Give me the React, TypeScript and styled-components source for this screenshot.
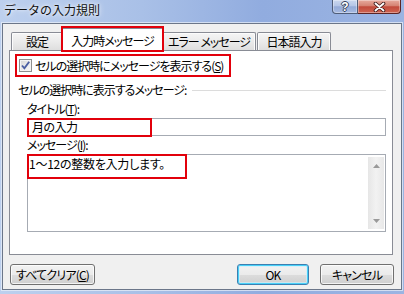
import React from "react";
import styled, { createGlobalStyle } from "styled-components";

const Global = createGlobalStyle`
  html, body { margin: 0; padding: 0; background: #fff; }
  body { width: 404px; height: 294px; overflow: hidden; }
  #root { width: 404px; height: 294px; }
`;

const FONT = `"Noto Sans CJK JP", "Noto Sans", sans-serif`;
const RED = "#e2000b";

const Window = styled.div`
  width: 404px;
  height: 294px;
  box-sizing: border-box;
  display: flex;
  flex-direction: column;
  padding: 0 2px 4px 2px;
  background: linear-gradient(90deg, #bdd0ee 0%, #a9c0e7 35%, #91acdf 65%, #9bb4e2 100%);
  font-family: ${FONT};
  font-size: 12px;
  color: #000;
`;

const TitleBar = styled.div`
  height: 23px;
  flex-shrink: 0;
  margin: 0 -2px;
  display: flex;
  align-items: flex-start;
`;

const TitleText = styled.div`
  padding-left: 4px;
  height: 19px;
  line-height: 19px;
  font-size: 12px;
  color: #111;
  text-shadow: 0 0 6px rgba(255, 255, 255, 0.95), 0 0 3px rgba(255, 255, 255, 0.8);
`;

const CaptionGroup = styled.div`
  display: flex;
  margin-left: auto;
  margin-right: 3px;
`;

const CaptionButton = styled.div<{ $kind: "help" | "close" }>`
  box-sizing: border-box;
  width: ${(p) => (p.$kind === "close" ? 43 : 26)}px;
  height: 14px;
  border: 1px solid ${(p) => (p.$kind === "close" ? "#5c2424" : "#4f5d78")};
  border-top: none;
  border-left: ${(p) => (p.$kind === "close" ? "none" : "1px solid #4f5d78")};
  border-radius: ${(p) => (p.$kind === "close" ? "0 0 4px 0" : "0 0 0 4px")};
  background: ${(p) =>
    p.$kind === "close"
      ? "linear-gradient(#e7ab9e 0%, #d58272 45%, #c24a3b 52%, #cf6552 100%)"
      : "linear-gradient(#cbd8ef 0%, #b5c6e7 45%, #95abd8 52%, #a6bae2 100%)"};
  box-shadow: inset 0 0 0 1px rgba(255, 255, 255, 0.35);
  display: flex;
  align-items: center;
  justify-content: center;
`;

const HelpGlyph = styled.span`
  font-family: "Liberation Sans", sans-serif;
  font-weight: bold;
  font-size: 12px;
  line-height: 12px;
  color: #fff;
  text-shadow: 1px 0 #36415a, -1px 0 #36415a, 0 1px #36415a, 0 -1px #36415a;
`;

const Client = styled.div`
  flex: 1;
  display: flex;
  flex-direction: column;
  background: #f0f0f0;
  border: 1px solid #6b7689;
  box-shadow: 0 0 0 1px rgba(235, 241, 250, 0.7);
  padding: 4px 8px 4px 6px;
`;

const TabStrip = styled.div`
  height: 22px;
  padding-left: 2px;
  display: flex;
  align-items: flex-end;
  position: relative;
  z-index: 1;
`;

const Tab = styled.div<{ $w: number; $active?: boolean; $gap?: number }>`
  box-sizing: border-box;
  position: relative;
  width: ${(p) => p.$w}px;
  height: ${(p) => (p.$active ? 23 : 18)}px;
  margin: ${(p) => (p.$active ? "0 -2px -1px -2px" : `0 0 0 ${p.$gap ?? 0}px`)};
  padding-top: ${(p) => (p.$active ? 2 : 0)}px;
  border: 1px solid #898c95;
  border-bottom: none;
  border-radius: 2px 2px 0 0;
  background: ${(p) =>
    p.$active ? "#ffffff" : "linear-gradient(#f5f5f5 0%, #ebebeb 50%, #dedede 100%)"};
  box-shadow: ${(p) => (p.$active ? "none" : "inset 1px 1px 0 #fcfcfc, inset -1px 0 0 #fcfcfc")};
  z-index: ${(p) => (p.$active ? 2 : 1)};
  display: flex;
  align-items: center;
  justify-content: center;
  line-height: 14px;
  letter-spacing: -1px;
  font-feature-settings: "palt";
  white-space: nowrap;
`;

const TabMark = styled.span`
  position: absolute;
  top: -3px;
  left: -1px;
  right: -1px;
  bottom: -1px;
  border: 2px solid ${RED};
  pointer-events: none;
`;

const Panel = styled.div`
  box-sizing: border-box;
  height: 205px;
  border: 1px solid #898c95;
  background: #ffffff;
  display: flex;
  flex-direction: column;
  letter-spacing: -1px;
  font-feature-settings: "palt";
`;

const CheckRow = styled.label`
  box-sizing: border-box;
  width: 216px;
  height: 23px;
  margin: 3px 0 0 5px;
  padding-left: 2px;
  border: 2px solid ${RED};
  display: flex;
  align-items: center;
  gap: 3px;
  line-height: 14px;
  white-space: nowrap;
`;

const CheckBox = styled.span`
  box-sizing: border-box;
  width: 13px;
  height: 13px;
  flex-shrink: 0;
  border: 1px solid #8e8f8f;
  background: linear-gradient(135deg, #d6d6d6 0%, #eeeeee 60%, #f8f8f8 100%);
  box-shadow: inset 0 0 0 1px #f4f4f4;
  display: flex;
  align-items: center;
  justify-content: center;
`;

const AccessKey = styled.span`
  text-decoration: underline;
  text-underline-offset: 1px;
`;

const GroupRow = styled.div`
  height: 14px;
  margin: 6px 6px 0 8px;
  display: flex;
  align-items: center;
  gap: 6px;
  line-height: 14px;
  white-space: nowrap;
`;

const GroupLine = styled.div`
  flex: 1;
  height: 1px;
  background: #dcdcdc;
`;

const Fields = styled.div`
  margin: 5px 6px 0 17px;
  display: flex;
  flex-direction: column;
`;

const FieldLabel = styled.div<{ $top: number }>`
  height: 14px;
  line-height: 14px;
  margin-top: ${(p) => p.$top}px;
  white-space: nowrap;
`;

const TextBox = styled.div<{ $h: number }>`
  box-sizing: border-box;
  position: relative;
  margin-top: 2px;
  height: ${(p) => p.$h}px;
  border: 1px solid #a6abb3;
  background: #fff;
  display: flex;
`;

const BoxText = styled.div<{ $pl: number; $pt: number; $ls: number }>`
  flex: 1;
  padding: ${(p) => `${p.$pt}px 0 0 ${p.$pl}px`};
  line-height: 14px;
  letter-spacing: ${(p) => p.$ls}px;
  white-space: nowrap;
`;

const Mark = styled.span<{ $w: number; $h: number }>`
  position: absolute;
  top: -1px;
  left: -1px;
  box-sizing: border-box;
  width: ${(p) => p.$w}px;
  height: ${(p) => p.$h}px;
  border: 2px solid ${RED};
  pointer-events: none;
`;

const ScrollBar = styled.div`
  width: 16px;
  margin: 2px 1px 2px 0;
  background: linear-gradient(90deg, #e6e6e6, #f2f2f2 50%, #e8e8e8);
  display: flex;
  flex-direction: column;
  justify-content: space-between;
`;

const ScrollArrow = styled.div`
  height: 17px;
  display: flex;
  align-items: center;
  justify-content: center;
`;

const ButtonRow = styled.div`
  margin: 9px -1px 0 1px;
  display: flex;
  align-items: center;
`;

const Spacer = styled.div`
  flex: 1;
`;

const Button = styled.button<{ $w: number; $default?: boolean; $mr?: number }>`
  box-sizing: border-box;
  width: ${(p) => p.$w}px;
  height: 21px;
  margin: 0 ${(p) => p.$mr ?? 0}px 0 0;
  padding: 0;
  font-family: ${FONT};
  font-size: 12px;
  font-feature-settings: "palt";
  letter-spacing: -0.8px;
  color: #000;
  line-height: 14px;
  border: 1px solid ${(p) => (p.$default ? "#3c7fb1" : "#707070")};
  border-radius: 3px;
  background: linear-gradient(#f2f2f2 0%, #ebebeb 50%, #dddddd 50%, #cfcfcf 100%);
  box-shadow: ${(p) =>
    p.$default
      ? "inset 0 0 0 1px #48d0f8, inset 0 0 0 2px rgba(200,240,255,0.6)"
      : "inset 0 0 0 1px rgba(255,255,255,0.75)"};
  white-space: nowrap;
`;

export default function App() {
  return (
    <>
      <Global />
      <Window>
        <TitleBar>
          <TitleText>データの入力規則</TitleText>
          <CaptionGroup>
            <CaptionButton $kind="help">
              <HelpGlyph>?</HelpGlyph>
            </CaptionButton>
            <CaptionButton $kind="close">
              <svg width="13" height="10" viewBox="0 0 13 10">
                <path d="M2.5 1.5 L10.5 8.5 M10.5 1.5 L2.5 8.5" stroke="#3a1616" strokeWidth="3.6" strokeLinecap="round" />
                <path d="M2.5 1.5 L10.5 8.5 M10.5 1.5 L2.5 8.5" stroke="#ffffff" strokeWidth="1.9" strokeLinecap="round" />
              </svg>
            </CaptionButton>
          </CaptionGroup>
        </TitleBar>
        <Client>
          <TabStrip>
            <Tab $w={52}>設定</Tab>
            <Tab $w={103} $active>
              入力時メッセージ
              <TabMark />
            </Tab>
            <Tab $w={94}>エラー メッセージ</Tab>
            <Tab $w={74} $gap={1}>日本語入力</Tab>
          </TabStrip>
          <Panel>
            <CheckRow>
              <CheckBox>
                <svg width="11" height="11" viewBox="0 0 11 11">
                  <path d="M2 5.5 L4.4 8.3 L9.2 1.8" fill="none" stroke="#4b5fa3" strokeWidth="1.9" />
                </svg>
              </CheckBox>
              <span>
                セルの選択時にメッセージを表示する(<AccessKey>S</AccessKey>)
              </span>
            </CheckRow>
            <GroupRow>
              <span>セルの選択時に表示するメッセージ:</span>
              <GroupLine />
            </GroupRow>
            <Fields>
              <FieldLabel $top={0}>
                タイトル(<AccessKey>T</AccessKey>):
              </FieldLabel>
              <TextBox $h={18}>
                <BoxText $pl={4} $pt={1} $ls={-0.5}>月の入力</BoxText>
                <Mark $w={125} $h={19} />
              </TextBox>
              <FieldLabel $top={2}>
                メッセージ(<AccessKey>I</AccessKey>):
              </FieldLabel>
              <TextBox $h={78}>
                <BoxText $pl={1} $pt={2} $ls={-0.25}>1～12の整数を入力します。</BoxText>
                <ScrollBar>
                  <ScrollArrow>
                    <svg width="7" height="4" viewBox="0 0 7 4">
                      <path d="M0 4 L3.5 0 L7 4 Z" fill="#9a9a9a" />
                    </svg>
                  </ScrollArrow>
                  <ScrollArrow>
                    <svg width="7" height="4" viewBox="0 0 7 4">
                      <path d="M0 0 L7 0 L3.5 4 Z" fill="#9a9a9a" />
                    </svg>
                  </ScrollArrow>
                </ScrollBar>
                <Mark $w={160} $h={25} />
              </TextBox>
            </Fields>
          </Panel>
          <ButtonRow>
            <Button $w={85}>
              すべてクリア(<AccessKey>C</AccessKey>)
            </Button>
            <Spacer />
            <Button $w={72} $default $mr={11}>
              OK
            </Button>
            <Button $w={74}>キャンセル</Button>
          </ButtonRow>
        </Client>
      </Window>
    </>
  );
}
